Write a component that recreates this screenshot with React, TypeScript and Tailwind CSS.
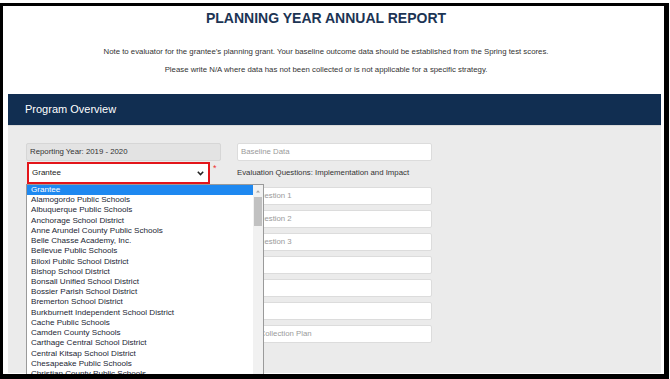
import React from "react";

const schools = [
  "Alamogordo Public Schools",
  "Albuquerque Public Schools",
  "Anchorage School District",
  "Anne Arundel County Public Schools",
  "Belle Chasse Academy, Inc.",
  "Bellevue Public Schools",
  "Biloxi Public School District",
  "Bishop School District",
  "Bonsall Unified School District",
  "Bossier Parish School District",
  "Bremerton School District",
  "Burkburnett Independent School District",
  "Cache Public Schools",
  "Camden County Schools",
  "Carthage Central School District",
  "Central Kitsap School District",
  "Chesapeake Public Schools",
  "Christian County Public Schools",
];

function Box({ text, pad = "pl-[3px]" }: { text?: string; pad?: string }) {
  return (
    <div
      className={`h-[18px] bg-white border border-[#dcdcdc] rounded-[2px] flex items-center ${pad} text-[7.8px] text-[#9a9a9a]`}
    >
      {text}
    </div>
  );
}

export default function App() {
  return (
    <div className="w-[670px] h-[379px] bg-white overflow-hidden font-['Liberation_Sans',Arial,sans-serif]">
      <div className="mt-[3px] w-[669px] h-[376px] border-t-[3px] border-l-[3px] border-r-[5px] border-b-[5px] border-black flex flex-col pl-[5px] pr-[3px] pb-[1px] overflow-hidden">
        {/* Header */}
        <div className="h-[88px] shrink-0 flex flex-col items-center pr-[17px]">
          <h1 className="pt-[2px] text-[14px] leading-[20px] font-bold text-[#1c3454]">
            PLANNING YEAR ANNUAL REPORT
          </h1>
          <p className="mt-[15px] text-[7.8px] leading-[18px] text-[#333]">
            Note to evaluator for the grantee’s planning grant. Your baseline outcome data should be established from the Spring test scores.
          </p>
          <p className="text-[7.8px] leading-[18px] text-[#333]">
            Please write N/A where data has not been collected or is not applicable for a specific strategy.
          </p>
        </div>
        {/* Section bar */}
        <div className="h-[31px] shrink-0 bg-[#112e51] flex items-center pl-[17px] text-white text-[11px]">
          Program Overview
        </div>
        {/* Panel */}
        <div className="flex-1 bg-[#ebebeb] border-t border-[#d9d9d9] pl-[18px] pt-[17px] flex">
          {/* Left column */}
          <div className="w-[195px] relative">
            <div className="h-[18px] bg-[#e3e3e3] border border-[#d6d6d6] rounded-[2px] flex items-center pl-[3px] text-[7.8px] text-[#333]">
              Reporting Year: 2019 - 2020
            </div>
            <div className="mt-[1px] flex items-start">
              <div className="ml-[1px] w-[183px] h-[22px] border-2 border-[#e3151a] bg-white flex items-center justify-between pl-[3px] pr-[4px] text-[8px] text-[#222]">
                <span>Grantee</span>
                <svg width="7" height="5" viewBox="0 0 7 5">
                  <path d="M0.8 0.8 L3.5 3.6 L6.2 0.8" fill="none" stroke="#222" strokeWidth="1.5" />
                </svg>
              </div>
              <span className="ml-[3px] mt-[2px] text-[9px] leading-[9px] text-[#e33]">*</span>
            </div>
            {/* Open dropdown list */}
            <div className="absolute left-0 top-[41px] w-[238px] h-[200px] bg-white border border-[#9a9a9a] border-b-0 flex z-10">
              <div className="flex-1 text-[8.1px] leading-[10.22px] text-[#232634]">
                <div className="bg-[#1e88f0] text-white pl-[4px]">Grantee</div>
                {schools.map((s) => (
                  <div key={s} className="pl-[4px] whitespace-nowrap">
                    {s}
                  </div>
                ))}
              </div>
              <div className="w-[10px] bg-[#f1f1f1] flex flex-col items-center">
                <svg width="6" height="10" viewBox="0 0 6 10" className="mt-[1px]">
                  <path d="M1 6.5 L3 4.3 L5 6.5 Z" fill="#a3a3a3" />
                </svg>
                <div className="mt-[1px] w-[8px] h-[29px] bg-[#c1c1c1]" />
              </div>
            </div>
          </div>
          {/* Right column */}
          <div className="ml-[16px] w-[195px] flex flex-col">
            <Box text="Baseline Data" />
            <div className="mt-[7px] mb-[9px] text-[7.8px] leading-[10px] text-[#333]">
              Evaluation Questions: Implementation and Impact
            </div>
            <div className="flex flex-col gap-[5px]">
              <Box text="Question 1" pad="pl-[16px]" />
              <Box text="Question 2" pad="pl-[16px]" />
              <Box text="Question 3" pad="pl-[16px]" />
              <Box />
              <Box />
              <Box />
              <Box text="Data Collection Plan" />
            </div>
          </div>
        </div>
      </div>
    </div>
  );
}
